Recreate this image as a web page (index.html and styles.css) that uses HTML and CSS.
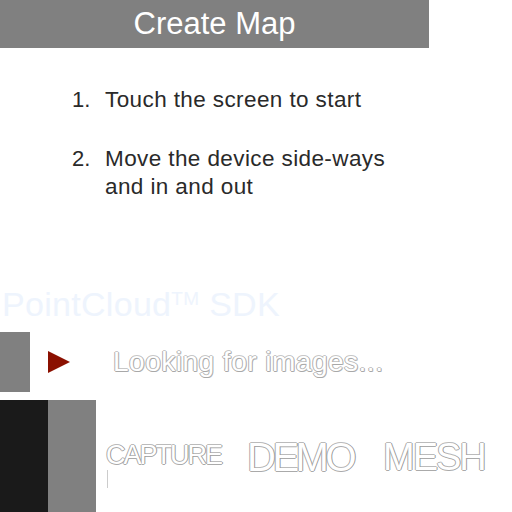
FILE: index.html
```html
<!DOCTYPE html>
<html>
<head>
<meta charset="utf-8">
<link rel="stylesheet" href="styles.css">
</head>
<body>
<div class="header"><span class="title">Create Map</span></div>
<ol class="steps">
  <li class="step"><span class="num">1.</span><span class="txt">Touch the screen to start</span></li>
  <li class="step step2"><span class="num">2.</span><span class="txt">Move the device side-ways<br>and in and out</span></li>
</ol>
<div class="brand">PointCloud<sup class="tm">TM</sup> SDK</div>
<div class="status">
  <div class="status-block"></div>
  <svg class="play" width="24" height="24" viewBox="0 0 24 24"><polygon points="1,1 23,12 1,23" fill="#8b1000"/></svg>
  <span class="looking">Looking for images...</span>
</div>
<div class="bottom">
  <div class="blk black"></div>
  <div class="blk grey"></div>
  <div class="tabs">
    <span class="tab capture">CAPTURE<span class="cursor"></span></span>
    <span class="tab demo">DEMO</span>
    <span class="tab mesh">MESH</span>
  </div>
</div>
</body>
</html>
```
FILE: styles.css
```css
html, body { margin: 0; padding: 0; background: #fff; }
body { width: 512px; height: 512px; overflow: hidden; font-family: "Liberation Sans", Arial, sans-serif; }
.header { width: 429px; height: 48px; background: #808080; display: flex; align-items: center; justify-content: center; }
.title { color: #fff; font-size: 31px; font-weight: 300; }
.steps { list-style: none; margin: 38px 0 0 72px; padding: 0; color: #2a2a2a; font-size: 22px; }
.step { display: flex; line-height: 28px; }
.txt { font-size: 22.5px; letter-spacing: 0.4px; }
.step2 { margin-top: 31px; }
.num { width: 33px; flex: none; }
.brand { margin-top: 85px; margin-left: 2px; font-size: 34px; color: #eef4fd; line-height: 36px; letter-spacing: 0.3px; }
.tm { font-size: 19px; vertical-align: 11px; line-height: 0; }
.status { display: flex; align-items: center; margin-top: 10px; height: 60px; }
.status-block { width: 30px; height: 60px; background: #808080; }
.play { margin-left: 17px; }
.looking { margin-left: 42px; color: #fff; font-size: 28px; letter-spacing: 0.5px;
  text-shadow: 1px 0 0 #b0b0b0, -1px 0 0 #b0b0b0, 0 1px 0 #a8a8a8, 0 -1px 0 #c8c8c8, 1px 1px 0 #bdbdbd; }
.bottom { display: flex; margin-top: 8px; height: 112px; }
.blk { width: 48px; height: 112px; }
.black { background: #1a1a1a; }
.grey { background: #808080; }
.tabs { display: flex; align-items: flex-start; padding-top: 36px; }
.tab { color: #fff; position: relative; line-height: 1; text-shadow: 1px 0 0 #999, -1px 0 0 #aaa, 0 1px 0 #aaa, 0 -1px 0 #bbb; }
.capture { margin-left: 10px; font-size: 27px; letter-spacing: -2px; margin-top: 6px; }
.demo { margin-left: 26px; font-size: 40px; letter-spacing: -3.5px; margin-top: 1px; }
.mesh { margin-left: 30px; font-size: 38px; letter-spacing: -2px; margin-top: 2px; }
.cursor { position: absolute; left: 1px; top: 28px; width: 1px; height: 18px; background: #ccc; }
```
